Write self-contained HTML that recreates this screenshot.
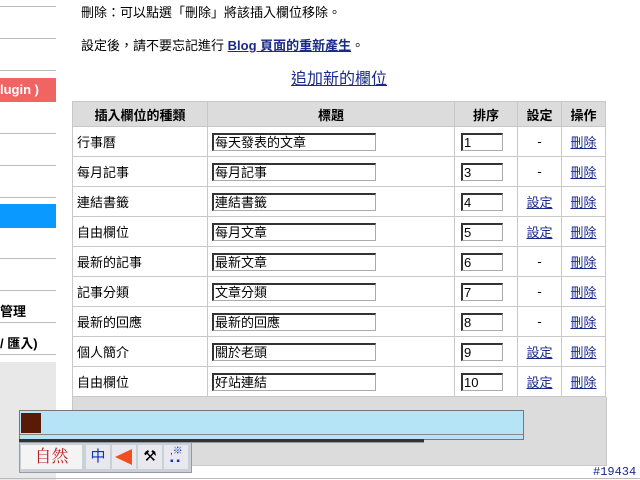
<!DOCTYPE html>
<html><head><meta charset="utf-8"><style>
body{margin:0;width:640px;height:480px;background:#fff;position:relative;overflow:hidden;font-family:"Liberation Sans","Noto Sans CJK TC",sans-serif;font-size:13px;color:#000}
.a{position:absolute}
.hl{position:absolute;left:0;width:56px;height:1px;background:#bbb}
table{position:absolute;left:72px;top:101px;border-collapse:collapse;width:534px}
td,th{border:1px solid #c8c8c8;height:29px;padding:0 0 0 4px;font-size:13px;text-align:left}
th{background:#dcdcdc;height:24px;text-align:center;font-weight:bold;padding:0}
.c{text-align:center;padding:0}
.in{display:inline-block;border:1px solid #aaa;border-top:2px solid #333;border-left:2px solid #333;height:15px;line-height:15px;font-size:13px;background:#fff;vertical-align:middle;padding-left:1px}
a{color:#1a2a8a;text-decoration:underline}
</style></head><body>
<div class="a" style="left:81px;top:2px">刪除：可以點選「刪除」將該插入欄位移除。</div>
<div class="a" style="left:81px;top:35px">設定後，請不要忘記進行 <a style="font-weight:bold;color:#1a2a8a">Blog 頁面的重新產生</a>。</div>
<div class="a" style="left:291px;top:65px;font-size:16px"><a style="color:#1a2a8a">追加新的欄位</a></div>
<div class="hl" style="top:6px"></div><div class="hl" style="top:38px"></div><div class="hl" style="top:70px"></div>
<div class="a" style="left:0;top:78px;width:56px;height:24px;background:#f06464;color:#fff;font-weight:bold;line-height:24px">lugin )</div>
<div class="hl" style="top:133px"></div><div class="hl" style="top:165px"></div><div class="hl" style="top:197px"></div>
<div class="a" style="left:0;top:204px;width:56px;height:24px;background:#0a9aff"></div>
<div class="hl" style="top:258px"></div><div class="hl" style="top:290px"></div>
<div class="a" style="left:0;top:301px;font-weight:bold">管理</div>
<div class="hl" style="top:322px"></div>
<div class="a" style="left:0;top:333px;font-weight:bold">/ 匯入)</div>
<div class="hl" style="top:354px"></div>
<div class="a" style="left:0;top:362px;width:56px;height:118px;background:#e8e8e8"></div>
<table>
<tr><th style="width:134px">插入欄位的種類</th><th>標題</th><th style="width:62px">排序</th><th style="width:43px">設定</th><th style="width:43px">操作</th></tr>
<tr><td>行事曆</td><td><span class="in" style="width:160px">每天發表的文章</span></td><td style="padding-left:6px"><span class="in" style="width:38px">1</span></td><td class="c">-</td><td class="c"><a>刪除</a></td></tr>
<tr><td>每月記事</td><td><span class="in" style="width:160px">每月記事</span></td><td style="padding-left:6px"><span class="in" style="width:38px">3</span></td><td class="c">-</td><td class="c"><a>刪除</a></td></tr>
<tr><td>連結書籤</td><td><span class="in" style="width:160px">連結書籤</span></td><td style="padding-left:6px"><span class="in" style="width:38px">4</span></td><td class="c"><a>設定</a></td><td class="c"><a>刪除</a></td></tr>
<tr><td>自由欄位</td><td><span class="in" style="width:160px">每月文章</span></td><td style="padding-left:6px"><span class="in" style="width:38px">5</span></td><td class="c"><a>設定</a></td><td class="c"><a>刪除</a></td></tr>
<tr><td>最新的記事</td><td><span class="in" style="width:160px">最新文章</span></td><td style="padding-left:6px"><span class="in" style="width:38px">6</span></td><td class="c">-</td><td class="c"><a>刪除</a></td></tr>
<tr><td>記事分類</td><td><span class="in" style="width:160px">文章分類</span></td><td style="padding-left:6px"><span class="in" style="width:38px">7</span></td><td class="c">-</td><td class="c"><a>刪除</a></td></tr>
<tr><td>最新的回應</td><td><span class="in" style="width:160px">最新的回應</span></td><td style="padding-left:6px"><span class="in" style="width:38px">8</span></td><td class="c">-</td><td class="c"><a>刪除</a></td></tr>
<tr><td>個人簡介</td><td><span class="in" style="width:160px">關於老頭</span></td><td style="padding-left:6px"><span class="in" style="width:38px">9</span></td><td class="c"><a>設定</a></td><td class="c"><a>刪除</a></td></tr>
<tr><td>自由欄位</td><td><span class="in" style="width:160px">好站連結</span></td><td style="padding-left:6px"><span class="in" style="width:38px">10</span></td><td class="c"><a>設定</a></td><td class="c"><a>刪除</a></td></tr>
</table>
<div class="a" style="left:72px;top:397px;width:533px;height:68px;background:#dcdcdc;border:1px solid #c8c8c8;border-top:none"></div>
<div class="a" style="left:19px;top:410px;width:503px;height:28px;background:#b4e4f6;border:1px solid #777"></div>
<div class="a" style="left:20px;top:434px;width:503px;height:1px;background:#888"></div>
<div class="a" style="left:21px;top:413px;width:20px;height:20px;background:#5a1a08"></div>
<div class="a" style="left:19px;top:439px;width:405px;height:3px;background:#333;border-bottom:1px solid #999"></div>
<div class="a" style="left:19px;top:442px;width:171px;height:29px;background:#c8d0d8;border:1px solid #99a"></div>
<div class="a" style="left:21px;top:445px;width:61px;height:24px;background:#f4f4f4;color:#c02020;font-family:'Liberation Serif','Noto Serif CJK SC',serif;font-size:17px;text-align:center;line-height:24px">自然</div>
<div class="a" style="left:86px;top:445px;width:24px;height:24px;background:#e8e8ee;color:#1030c0;font-size:15px;text-align:center;line-height:24px">中</div>
<div class="a" style="left:112px;top:445px;width:24px;height:24px;background:#e8e8ee"><svg width="24" height="24"><polygon points="3,12 20,4 20,20" fill="#f05020"/></svg></div>
<div class="a" style="left:138px;top:445px;width:24px;height:24px;background:#e8e8ee;text-align:center;line-height:24px;font-size:15px">⚒</div>
<div class="a" style="left:164px;top:445px;width:24px;height:24px;background:#e8e8ee;color:#1030c0;font-size:10px;line-height:10px;padding:2px 0 0 6px;box-sizing:border-box">,※<br>▪ ▪</div>
<div class="a" style="left:593px;top:465px;color:#1a2a8a;font-size:12px;font-family:'Liberation Mono',monospace">#19434</div>
<div class="a" style="left:0;top:478px;width:640px;height:1px;background:#bbb"></div>
</body></html>
